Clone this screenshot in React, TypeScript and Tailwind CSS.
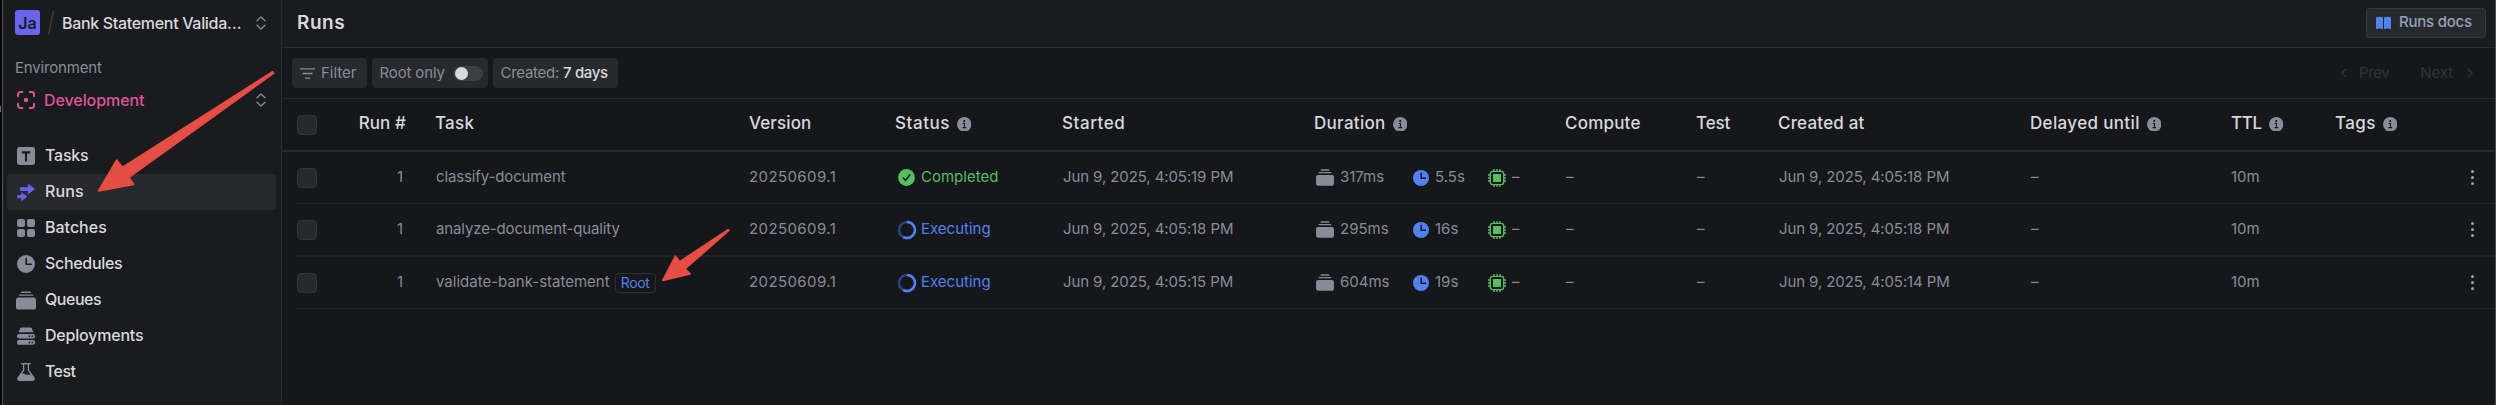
import type { ReactNode } from "react";

/* ---------- icons ---------- */

function QueueIcon({ className }: { className?: string }) {
  return (
    <svg viewBox="0 0 20 19" className={className} fill="currentColor">
      <path d="M5.6.4h8.8l.8 1.5H4.8z" />
      <path d="M3.8 3.4h12.4c.6 0 1 .5 1.2 1.4H2.6c.2-.9.6-1.4 1.2-1.4z" />
      <rect x="0" y="6.6" width="20" height="12" rx="2.2" />
    </svg>
  );
}

function ClockIcon({ className, hand }: { className?: string; hand: string }) {
  return (
    <svg viewBox="0 0 18 18" className={className}>
      <circle cx="9" cy="9" r="9" fill="currentColor" />
      <path d="M9.2 3.6v5.7h5" fill="none" stroke={hand} strokeWidth="1.6" strokeLinecap="round" strokeLinejoin="round" />
    </svg>
  );
}

function CpuIcon() {
  return (
    <svg viewBox="0 0 18 18" className="size-[18px] text-[#57bd62]" fill="none" stroke="currentColor">
      <rect x="2.3" y="2.3" width="13.4" height="13.4" rx="2.4" strokeWidth="1.3" />
      <rect x="5" y="5" width="8" height="8" fill="currentColor" stroke="none" />
      <path d="M6 0v2M9 0v2M12 0v2M6 16v2M9 16v2M12 16v2M0 6h2M0 9h2M0 12h2M16 6h2M16 9h2M16 12h2" strokeWidth="1.3" />
    </svg>
  );
}

function InfoIcon() {
  return (
    <svg viewBox="0 0 14 14" className="size-[14.5px] text-[#878c99]">
      <circle cx="7" cy="7" r="7" fill="currentColor" />
      <circle cx="7" cy="3.9" r="1.05" fill="#16171b" />
      <path d="M5.6 6.3h1.6v3.9M5.4 10.3h3.4" stroke="#16171b" strokeWidth="1.1" fill="none" />
    </svg>
  );
}

function UpDown() {
  return (
    <svg viewBox="0 0 10 14" className="h-[14px] w-[10px] text-[#878c99]" fill="none" stroke="currentColor" strokeWidth="1.3" strokeLinecap="round" strokeLinejoin="round">
      <path d="M1 4.8 5 1l4 3.8M1 9.2 5 13l4-3.8" />
    </svg>
  );
}

function Spinner() {
  return (
    <svg viewBox="0 0 20 20" className="size-5" fill="none" strokeWidth="2.5">
      <circle cx="10" cy="10" r="8" stroke="#2c4281" />
      <path d="M11 2.06A8 8 0 1 1 7.2 17.5" stroke="#5281f0" strokeLinecap="round" />
    </svg>
  );
}

function CheckIcon() {
  return (
    <svg viewBox="0 0 17 17" className="size-[17px]">
      <circle cx="8.5" cy="8.5" r="8.4" fill="#57bd62" />
      <path d="m5.4 9 2.2 2.4 4.2-5.6" fill="none" stroke="#16171b" strokeWidth="1.5" strokeLinecap="round" strokeLinejoin="round" />
    </svg>
  );
}

const TaskIcon = () => (
  <svg viewBox="0 0 18 18" className="size-[18px]">
    <rect width="18" height="18" rx="2.4" fill="#878c99" />
    <path d="M4.8 5.4h8.4M9 5v9.6" stroke="#1a1b1f" strokeWidth="2.1" fill="none" />
  </svg>
);

const RunsIcon = () => (
  <svg viewBox="0 0 18 18" className="size-[18px] text-[#6a65ee]" fill="currentColor" stroke="currentColor" strokeLinejoin="round" strokeWidth=".8">
    <path d="M3.4 4.7h8V1.2L17.4 6l-6 4.8V7.4h-8z" />
    <path d="M.6 12.5h4v-2.8L9.8 13.6l-5.2 3.9v-2.7h-4z" />
  </svg>
);

const BatchesIcon = () => (
  <svg viewBox="0 0 18 18" className="size-[18px] text-[#878c99]" fill="currentColor">
    <rect width="8" height="8" rx="2.2" />
    <rect x="10" width="8" height="8" rx="2.2" />
    <rect y="10" width="8" height="8" rx="2.2" />
    <rect x="10" y="10" width="8" height="8" rx="2.2" />
  </svg>
);

const DeployIcon = () => (
  <svg viewBox="0 0 18 18" className="size-[18px]">
    <g fill="#878c99">
      <path d="M4.4.5h9.2c.6 0 1 .3 1.2.8l1.6 3.9H1.6l1.6-3.9C3.4.8 3.8.5 4.4.5z" />
      <rect y="6.9" width="18" height="4.6" rx="2" />
      <rect y="13.1" width="18" height="4.6" rx="2" />
    </g>
    <g fill="#1a1b1f">
      <circle cx="12.4" cy="9.2" r=".85" />
      <circle cx="15.3" cy="9.2" r=".85" />
      <circle cx="12.4" cy="15.4" r=".85" />
      <circle cx="15.3" cy="15.4" r=".85" />
    </g>
  </svg>
);

const BeakerIcon = () => (
  <svg viewBox="0 0 18 18" className="size-[18px] text-[#878c99]" fill="none" stroke="currentColor">
    <path d="M4.8.7h8.4" strokeWidth="1.4" strokeLinecap="round" />
    <path d="M6.6 1v6.2L1.2 14.6c-.8 1.2-.2 2.7 1.2 2.7h13.2c1.4 0 2-1.5 1.2-2.7L11.4 7.2V1" strokeWidth="1.3" />
    <path d="M4 10.9c2.2-.9 3.6.1 5 .6s3.2.5 4.8-.2l3.200 4.300-1 1.700H2l-1-1.700z" fill="currentColor" stroke="none" />
  </svg>
);

const DevIcon = () => (
  <svg viewBox="0 0 18 18" className="size-[18px] text-[#df5597]" fill="none" stroke="currentColor" strokeWidth="1.9" strokeLinecap="round">
    <path d="M1 5.3V3.2C1 2 2 1 3.2 1h2.1M12.7 1h2.1C16 1 17 2 17 3.2v2.1M17 12.7v2.1c0 1.2-1 2.2-2.2 2.2h-2.1M5.3 17H3.2C2 17 1 16 1 14.8v-2.1" />
    <circle cx="9" cy="9" r="2.2" fill="currentColor" stroke="none" />
  </svg>
);

/* ---------- sidebar ---------- */

function NavItem({ icon, active, children }: { icon: ReactNode; active?: boolean; children: ReactNode }) {
  return (
    <div className={active ? "flex h-9 items-center rounded-[4px] bg-[#28292d] pl-2" : "flex h-9 items-center rounded-[4px] pl-2"}>
      <span className="flex w-[22px] justify-center">{icon}</span>
      <span className="ml-2 pb-[2px] text-base font-medium text-[#d7d9dd]">{children}</span>
    </div>
  );
}

function Sidebar() {
  return (
    <div className="flex h-full w-[280px] shrink-0 flex-col border-r border-l border-r-[#27292d] border-l-[#515357] bg-[#1a1b1f]">
      <div className="flex h-[45px] items-center pl-[12px]">
        <span className="flex size-[25px] items-center justify-center rounded-[3px] bg-[#6a65ee] text-base font-semibold text-[#1a1b1f]">Ja</span>
        <svg viewBox="0 0 8 26" className="ml-[7px] h-[26px] w-2" fill="none" stroke="#3d3f45" strokeWidth="1.3"><path d="M6.5 1 1.5 25" /></svg>
        <span className="ml-[7px] w-[190px] text-base font-medium tracking-[-0.32px] text-[#d7d9dd]">Bank Statement Valida…</span>
        <span className="ml-[4px]"><UpDown /></span>
      </div>
      <div className="mt-[13px] pl-[12px] text-[15px] leading-5 tracking-[-0.17px] text-[#878c99]">Environment</div>
      <div className="mt-[4px] flex h-9 items-center pl-[14px]">
        <DevIcon />
        <span className="ml-[9px] w-[212px] pb-px text-base font-medium tracking-[-0.07px] text-[#df5597]">Development</span>
        <UpDown />
      </div>
      <div className="mt-[20px] flex flex-col pr-[5px] pl-[4px]">
        <NavItem icon={<TaskIcon />}><span className="tracking-[-0.23px]">Tasks</span></NavItem>
        <NavItem icon={<RunsIcon />} active><span className="tracking-[0.1px]">Runs</span></NavItem>
        <NavItem icon={<BatchesIcon />}>Batches</NavItem>
        <NavItem icon={<ClockIcon className="size-[18px] text-[#878c99]" hand="#1a1b1f" />}><span className="tracking-[-0.32px]">Schedules</span></NavItem>
        <NavItem icon={<QueueIcon className="h-[19px] w-5 text-[#878c99]" />}><span className="tracking-[-0.47px]">Queues</span></NavItem>
        <NavItem icon={<DeployIcon />}><span className="tracking-[-0.2px]">Deployments</span></NavItem>
        <NavItem icon={<BeakerIcon />}><span className="tracking-[-0.6px]">Test</span></NavItem>
      </div>
    </div>
  );
}

/* ---------- table ---------- */

const COLS =
  "grid grid-cols-[60px_48px_30px_314px_146px_167px_252px_251px_131px_82px_252px_201px_104px_129px_1fr] items-center pl-[15px]";

function Checkbox() {
  return <span className="size-5 rounded-[4px] border border-[#313337] bg-[#28292d]" />;
}

function Head({ className, info, children }: { className?: string; info?: boolean; children: ReactNode }) {
  return (
    <div className="flex items-center gap-[7px] pb-px whitespace-nowrap">
      <span className={className}>{children}</span>
      {info && <InfoIcon />}
    </div>
  );
}

type Run = { task: string; root?: boolean; done?: boolean; started: string; queued: string; ran: string; created: string; line: string };

const runs: Run[] = [
  { task: "classify-document", done: true, started: "Jun 9, 2025, 4:05:19 PM", queued: "317ms", ran: "5.5s", created: "Jun 9, 2025, 4:05:18 PM", line: "h-px bg-[#222428]" },
  { task: "analyze-document-quality", started: "Jun 9, 2025, 4:05:18 PM", queued: "295ms", ran: "16s", created: "Jun 9, 2025, 4:05:18 PM", line: "h-[2px] bg-[#202226]" },
  { task: "validate-bank-statement", root: true, started: "Jun 9, 2025, 4:05:15 PM", queued: "604ms", ran: "19s", created: "Jun 9, 2025, 4:05:14 PM", line: "h-px bg-[#222428]" },
];

function RunRow({ run }: { run: Run }) {
  return (
    <>
      <div className={`${COLS} h-[51px] text-[15px] whitespace-nowrap text-[#878c99]`}>
        <Checkbox />
        <span className="pr-[2px] text-right">1</span>
        <span />
        <div className="flex items-center pl-px">
          <span className={run.root ? "" : "tracking-[-0.13px]"}>{run.task}</span>
          {run.root && (
            <span className="ml-[5px] flex h-5 w-[41px] items-center justify-center rounded-[4px] border border-[#2c2e33] text-sm tracking-[-0.36px] text-[#5281f0]">Root</span>
          )}
        </div>
        <span className="tracking-[0.4px]">20250609.1</span>
        <div className="flex items-center">
          <span className="flex w-[23px] justify-center">{run.done ? <CheckIcon /> : <Spinner />}</span>
          {run.done ? (
            <span className="ml-[3px] text-[#57bd62]">Completed</span>
          ) : (
            <span className="ml-[3px] text-[#5281f0]">Executing</span>
          )}
        </div>
        <span className="pl-px tracking-[-0.1px]">{run.started}</span>
        <div className="flex items-center pl-[2px]">
          <QueueIcon className="h-[17px] w-[18px]" />
          <span className="ml-[6px] w-[73px]">{run.queued}</span>
          <ClockIcon className="size-4 text-[#5281f0]" hand="#16171b" />
          <span className="ml-[6px] w-[53px]">{run.ran}</span>
          <CpuIcon />
          <span className="ml-[6px]">–</span>
        </div>
        <span className="pl-px">–</span>
        <span className="pl-px">–</span>
        <span className="pl-px tracking-[-0.1px]">{run.created}</span>
        <span className="pl-px">–</span>
        <span>10m</span>
        <span />
        <div className="flex flex-col items-start gap-[3px] pl-[7px]">
          <i className="size-[3px] rounded-full bg-[#9da1ab]" />
          <i className="size-[3px] rounded-full bg-[#9da1ab]" />
          <i className="size-[3px] rounded-full bg-[#9da1ab]" />
        </div>
      </div>
      <div className={`ml-[15px] ${run.line}`} />
    </>
  );
}

/* ---------- page ---------- */

export default function App() {
  return (
    <div className="relative flex h-[405px] w-[2496px] overflow-hidden bg-[#16171b] pl-[2px] font-['Inter',sans-serif] shadow-[inset_2px_0_0_#050506]">
      <Sidebar />
      <main className="flex min-w-0 flex-1 flex-col border-r border-[#4a4c50]">
        <div className="flex h-12 items-center justify-between border-b border-[#27292d] bg-[#1a1b1f] pr-[9px] pb-[2px] pl-[15px]">
          <h1 className="text-[19px] leading-6 font-semibold tracking-[0.5px] text-[#d7d9dd]">Runs</h1>
          <div className="flex h-[30px] w-[120px] items-center rounded-[3px] border border-[#35373c] bg-[#28292d] pl-[9px] text-[15px] font-medium tracking-[-0.23px] whitespace-nowrap text-[#94a1b8]">
            <svg viewBox="0 0 15 14" className="mr-2 h-[14px] w-[15px] text-[#5281f0]" fill="currentColor">
              <path d="M0 1.5C2.3.4 4.8.4 7 1.5V13.3c-2.2-1-4.7-1-7 0zM8 1.5c2.2-1.1 4.7-1.1 7 0v11.8c-2.300-1-4.800-1-7 0z" />
            </svg>
            Runs docs
          </div>
        </div>

        <div className="flex h-[51px] items-center justify-between border-b border-[#27292d] pr-[22px] pl-[10px] text-[15px] text-[#878c99]">
          <div className="flex gap-[5px]">
            <div className="flex h-[30px] w-[75px] items-center rounded-[4px] bg-[#28292d] pl-2">
              <svg viewBox="0 0 15 11" className="mr-[6px] h-[11px] w-[15px]" stroke="currentColor" strokeWidth="1.3"><path d="M0 .8h15M2.5 5.5h10M5 10.2h5" /></svg>
              Filter
            </div>
            <div className="flex h-[30px] w-[116px] items-center rounded-[4px] bg-[#28292d] pl-[7.5px]">
              <span className="w-[73px] tracking-[-0.14px]">Root only</span>
              <span className="flex h-[15px] w-[30px] items-center rounded-full bg-[#3b3e45] pl-[2px]">
                <span className="size-[13px] rounded-full bg-[#d7d9dd]" />
              </span>
            </div>
            <div className="flex h-[30px] w-[125px] items-center rounded-[4px] bg-[#28292d] pl-[7.5px]">
              <span className="tracking-[-0.27px]">Created:</span>
              <span className="ml-[4px] font-medium tracking-[-0.35px] text-[#d7d9dd]">7 days</span>
            </div>
          </div>
          <div className="flex items-center text-[#303338]">
            <svg viewBox="0 0 6 10" className="h-[10px] w-[6px]" fill="none" stroke="currentColor" strokeWidth="1.4"><path d="M5.3.8 1 5l4.3 4.2" /></svg>
            <span className="ml-[12px] tracking-[-0.4px]">Prev</span>
            <span className="ml-[31px] tracking-[-0.1px]">Next</span>
            <svg viewBox="0 0 6 10" className="ml-[14px] h-[10px] w-[6px]" fill="none" stroke="currentColor" strokeWidth="1.4"><path d="M.7.8 5 5 .7 9.2" /></svg>
          </div>
        </div>

        <div className={`${COLS} h-[53px] border-b-2 border-[#27292d] text-[17px] font-medium text-[#d7d9dd]`}>
          <Checkbox />
          <div className="-mr-px flex justify-end"><Head className="tracking-[0.1px]">Run #</Head></div>
          <span />
          <Head className="tracking-[0.25px]">Task</Head>
          <Head className="tracking-[0.1px]">Version</Head>
          <Head className="tracking-[0.55px]" info>Status</Head>
          <Head className="tracking-[0.55px]">Started</Head>
          <Head className="tracking-[0.3px]" info>Duration</Head>
          <Head className="tracking-[0.2px]">Compute</Head>
          <Head className="tracking-[-0.1px]">Test</Head>
          <Head className="tracking-[0.2px]">Created at</Head>
          <Head className="tracking-[0.35px]" info>Delayed until</Head>
          <Head className="tracking-[-0.4px]" info>TTL</Head>
          <Head className="tracking-[0.4px]" info>Tags</Head>
          <span />
        </div>
        {runs.map((run) => (
          <RunRow key={run.task} run={run} />
        ))}
      </main>

      <span className="absolute top-[106px] left-0 h-[6px] w-px bg-[#6d7080]" />
      <svg className="absolute inset-0" width="2496" height="405" viewBox="0 0 2496 405" fill="#e54d45" stroke="#e54d45" strokeWidth="1.5" strokeLinejoin="round">
        <path d="M272.6 71.6 122.3 167.3 116.7 160 98.5 191 133.7 184.5 129 177.3 273.8 73.2z" />
        <path d="M728 229.5 679.7 261.7 675.3 256 662.7 280.4 690.2 274 685.3 268.7 729 230.5z" />
      </svg>
    </div>
  );
}
